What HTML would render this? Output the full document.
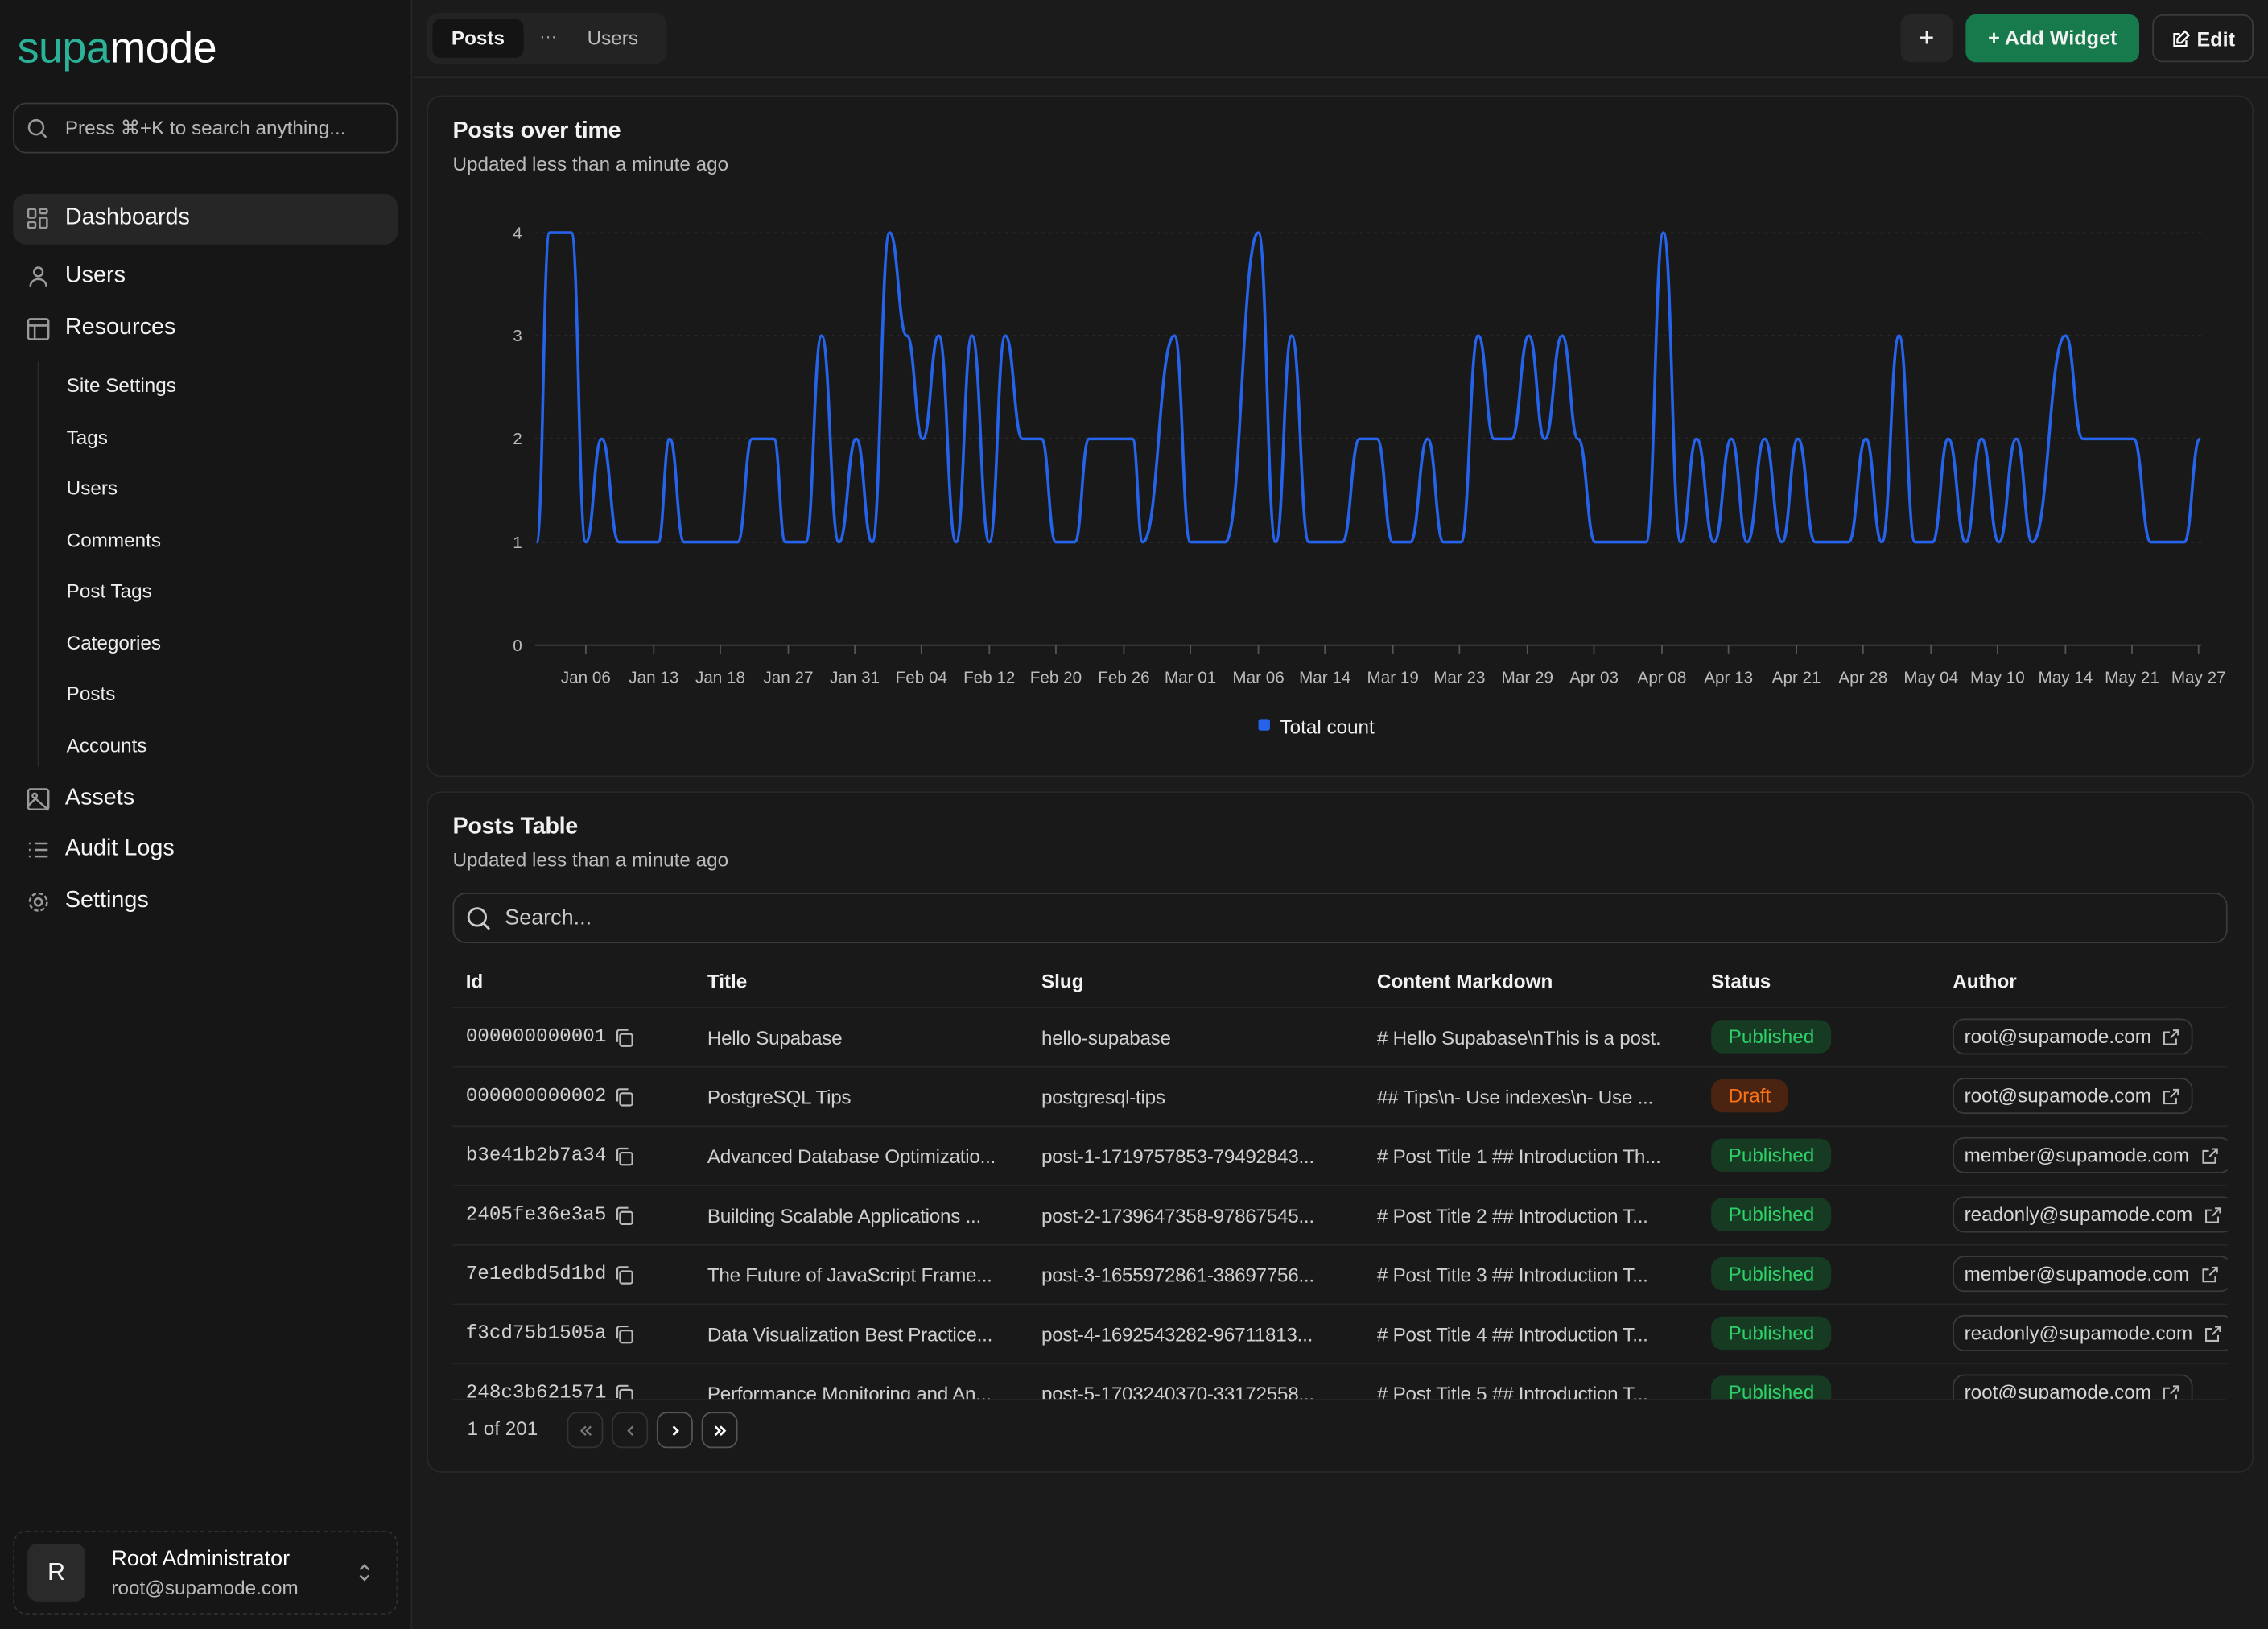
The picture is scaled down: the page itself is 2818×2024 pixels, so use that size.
<!DOCTYPE html>
<html><head><meta charset="utf-8"><style>
*{box-sizing:border-box;margin:0;padding:0}
html,body{width:2818px;height:2024px;overflow:hidden;background:#1a1a1a}
#w{position:absolute;left:0;top:0;width:1568px;height:1126px;transform:scale(1.79719,1.79751);transform-origin:0 0;font-family:"Liberation Sans",sans-serif;color:#f2f2f2;background:#1b1b1b}
.a{position:absolute}
.sb{left:0;top:0;width:285px;height:1126px;background:#161616;border-right:1px solid #262626}
.nav{left:18px;font-size:16px;color:#f4f4f4;display:flex;align-items:center;gap:10px}
.sub{left:46px;font-size:13.5px;color:#eee}
.ic{stroke:#9a9a9a;fill:none;stroke-width:1.4}
.card{background:#191919;border:1px solid #282828;border-radius:10px}
.t{font-size:13.5px;color:#cfcfcf;white-space:nowrap;letter-spacing:-0.15px}
.mono{font-family:"Liberation Mono",monospace;font-size:13.5px;color:#d0d0d0;display:flex;align-items:center;gap:5px}
.pub{background:#163a22;color:#2fd06a;border-radius:8px;padding:4px 12px;font-size:13.5px}
.dr{background:#4a2410;color:#f97316;border-radius:8px;padding:4px 12px;font-size:13.5px}
.au{border:1px solid #3a3a3a;border-radius:8px;padding:4px 7px;font-size:13.5px;color:#d6d6d6;white-space:nowrap;display:flex;align-items:center;gap:7px}
.hl{left:313px;width:1226px;height:1px;background:#262626}
.btn{border:1px solid #333;border-radius:7px;width:25px;height:25px;display:flex;align-items:center;justify-content:center}
.ci{stroke:#bbb;fill:none;stroke-width:1.3}
</style></head><body><div id="w">
<svg width="0" height="0" style="position:absolute"><defs>
<symbol id="cp" viewBox="0 0 16 16"><rect x="5" y="5" width="9" height="9" rx="1.5" class="ci"/><path d="M3 11V3.5C3 2.7 3.7 2 4.5 2H11" class="ci"/></symbol>
<symbol id="ex" viewBox="0 0 16 16"><path d="M12 9v4.5H2.5V4H7M9.5 2.5h4v4M13.5 2.5L7.5 8.5" class="ci"/></symbol>
</defs></svg>
<div class="a sb"></div>
<div class="a" style="left:12px;top:17px;font-size:30px;letter-spacing:-0.3px"><span style="color:#2bb39a">supa</span><span style="color:#fff">mode</span></div>
<div class="a" style="left:9px;top:71px;width:266px;height:35px;border:1px solid #3a3a3a;border-radius:9px"></div>
<svg class="a" style="left:18px;top:81px" width="16" height="16" viewBox="0 0 16 16"><circle cx="7" cy="7" r="5" class="ic"/><path d="M11 11l3 3" class="ic"/></svg>
<div class="a" style="left:45px;top:81px;font-size:13.5px;color:#b8b8b8">Press ⌘+K to search anything...</div>
<div class="a" style="left:9px;top:134px;width:266px;height:35px;background:#262626;border-radius:9px"></div>
<div class="a nav" style="top:142px"><svg width="17" height="17" viewBox="0 0 17 17"><rect x="1.5" y="1.5" width="5" height="6" rx="1" class="ic"/><rect x="9.5" y="1.5" width="5" height="3" rx="1" class="ic"/><rect x="9.5" y="7.5" width="5" height="7" rx="1" class="ic"/><rect x="1.5" y="10.5" width="5" height="4" rx="1" class="ic"/></svg>Dashboards</div>
<div class="a nav" style="top:182px"><svg width="17" height="17" viewBox="0 0 17 17"><circle cx="8.5" cy="5" r="3" class="ic"/><path d="M3 15c0-3 2.5-5 5.5-5s5.5 2 5.5 5" class="ic"/></svg>Users</div>
<div class="a nav" style="top:218px"><svg width="17" height="17" viewBox="0 0 17 17"><rect x="1.5" y="1.5" width="14" height="14" rx="1.5" class="ic"/><path d="M1.5 6h14M6 6v9.5" class="ic"/></svg>Resources</div>
<div class="a" style="left:26px;top:250px;width:1px;height:280px;background:#2c2c2c"></div>
<div class="a sub" style="top:259px">Site Settings</div>
<div class="a sub" style="top:295px">Tags</div>
<div class="a sub" style="top:330px">Users</div>
<div class="a sub" style="top:366px">Comments</div>
<div class="a sub" style="top:401px">Post Tags</div>
<div class="a sub" style="top:437px">Categories</div>
<div class="a sub" style="top:472px">Posts</div>
<div class="a sub" style="top:508px">Accounts</div>
<div class="a nav" style="top:543px"><svg width="17" height="17" viewBox="0 0 17 17"><rect x="1.5" y="1.5" width="14" height="14" rx="1.5" class="ic"/><circle cx="6" cy="6" r="1.5" class="ic"/><path d="M1.5 13l5-5 9 8" class="ic"/></svg>Assets</div>
<div class="a nav" style="top:578px"><svg width="17" height="17" viewBox="0 0 17 17"><path d="M2 4h1M2 8.5h1M2 13h1M6 4h9M6 8.5h9M6 13h9" class="ic"/></svg>Audit Logs</div>
<div class="a nav" style="top:614px"><svg width="17" height="17" viewBox="0 0 17 17"><circle cx="8.5" cy="8.5" r="2.5" class="ic"/><circle cx="8.5" cy="8.5" r="6" class="ic" stroke-dasharray="3 1.7"/></svg>Settings</div>
<div class="a" style="left:9px;top:1058px;width:266px;height:58px;border:1px dashed #2e2e2e;border-radius:9px"></div>
<div class="a" style="left:19px;top:1067px;width:40px;height:40px;background:#2a2a2a;border-radius:7px;display:flex;align-items:center;justify-content:center;font-size:17px">R</div>
<div class="a" style="left:77px;top:1069px;font-size:15px;color:#fff">Root Administrator</div>
<div class="a" style="left:77px;top:1090px;font-size:13.5px;color:#bbb">root@supamode.com</div>
<svg class="a" style="left:245px;top:1079px" width="14" height="16" viewBox="0 0 14 16"><path d="M4 6l3-3 3 3M4 10l3 3 3-3" class="ic"/></svg>

<div class="a" style="left:286px;top:53px;width:1282px;height:1px;background:#262626"></div>
<div class="a" style="left:295px;top:9px;width:166px;height:35px;background:#232323;border-radius:8px"></div>
<div class="a" style="left:299px;top:13px;width:63px;height:27px;background:#141414;border-radius:6px;font-size:13.5px;display:flex;align-items:center;justify-content:center;font-weight:bold">Posts</div>
<div class="a" style="left:373px;top:18px;color:#aaa;font-size:12px">···</div>
<div class="a" style="left:406px;top:19px;color:#bbb;font-size:13.5px">Users</div>
<div class="a" style="left:1314px;top:10px;width:36px;height:33px;background:#262626;border-radius:7px;text-align:center;line-height:32px;font-size:18px">+</div>
<div class="a" style="left:1359px;top:10px;width:120px;height:33px;background:#177a4d;border-radius:7px;text-align:center;line-height:33px;font-size:14px;font-weight:bold">+ Add Widget</div>
<div class="a" style="left:1488px;top:10px;width:70px;height:33px;border:1px solid #3a3a3a;border-radius:7px;display:flex;align-items:center;justify-content:center;gap:4px;font-size:14px;font-weight:bold"><svg width="14" height="14" viewBox="0 0 16 16"><path d="M12 9v4.5H2.5V4H7M11 2l3 3-6 6H5V8z" stroke="#fff" fill="none" stroke-width="1.5"/></svg>Edit</div>

<div class="a card" style="left:295px;top:66px;width:1263px;height:471px"></div>
<div class="a" style="left:313px;top:82px;font-size:16px;font-weight:bold;letter-spacing:-0.2px">Posts over time</div>
<div class="a" style="left:313px;top:106px;font-size:13.5px;color:#bbb">Updated less than a minute ago</div>
<svg class="a" style="left:0;top:0" width="1568" height="530">
<g stroke="#2a2a2a" stroke-dasharray="2 3"><line x1="370" x2="1522" y1="161" y2="161"/><line x1="370" x2="1522" y1="232" y2="232"/><line x1="370" x2="1522" y1="303" y2="303"/><line x1="370" x2="1522" y1="375" y2="375"/></g>
<line x1="370" x2="1522" y1="446" y2="446" stroke="#444"/>
<g stroke="#555"><line x1="405" x2="405" y1="446" y2="452"/><line x1="452" x2="452" y1="446" y2="452"/><line x1="498" x2="498" y1="446" y2="452"/><line x1="545" x2="545" y1="446" y2="452"/><line x1="591" x2="591" y1="446" y2="452"/><line x1="637" x2="637" y1="446" y2="452"/><line x1="684" x2="684" y1="446" y2="452"/><line x1="730" x2="730" y1="446" y2="452"/><line x1="777" x2="777" y1="446" y2="452"/><line x1="823" x2="823" y1="446" y2="452"/><line x1="870" x2="870" y1="446" y2="452"/><line x1="916" x2="916" y1="446" y2="452"/><line x1="963" x2="963" y1="446" y2="452"/><line x1="1009" x2="1009" y1="446" y2="452"/><line x1="1056" x2="1056" y1="446" y2="452"/><line x1="1102" x2="1102" y1="446" y2="452"/><line x1="1149" x2="1149" y1="446" y2="452"/><line x1="1195" x2="1195" y1="446" y2="452"/><line x1="1242" x2="1242" y1="446" y2="452"/><line x1="1288" x2="1288" y1="446" y2="452"/><line x1="1335" x2="1335" y1="446" y2="452"/><line x1="1381" x2="1381" y1="446" y2="452"/><line x1="1428" x2="1428" y1="446" y2="452"/><line x1="1474" x2="1474" y1="446" y2="452"/><line x1="1520" x2="1520" y1="446" y2="452"/></g>
<g fill="#bbb" font-size="11.5" font-family="Liberation Sans" text-anchor="end"><text x="361" y="165">4</text><text x="361" y="236">3</text><text x="361" y="307">2</text><text x="361" y="379">1</text><text x="361" y="450">0</text></g>
<g fill="#bbb" font-size="11.5" font-family="Liberation Sans" text-anchor="middle">
<text x="405" y="472">Jan 06</text><text x="452" y="472">Jan 13</text><text x="498" y="472">Jan 18</text><text x="545" y="472">Jan 27</text><text x="591" y="472">Jan 31</text><text x="637" y="472">Feb 04</text><text x="684" y="472">Feb 12</text><text x="730" y="472">Feb 20</text><text x="777" y="472">Feb 26</text><text x="823" y="472">Mar 01</text><text x="870" y="472">Mar 06</text><text x="916" y="472">Mar 14</text><text x="963" y="472">Mar 19</text><text x="1009" y="472">Mar 23</text><text x="1056" y="472">Mar 29</text><text x="1102" y="472">Apr 03</text><text x="1149" y="472">Apr 08</text><text x="1195" y="472">Apr 13</text><text x="1242" y="472">Apr 21</text><text x="1288" y="472">Apr 28</text><text x="1335" y="472">May 04</text><text x="1381" y="472">May 10</text><text x="1428" y="472">May 14</text><text x="1474" y="472">May 21</text><text x="1520" y="472">May 27</text></g>
<path id="ln" fill="none" stroke="#2563eb" stroke-width="2" stroke-linejoin="round" d=""/>
<rect x="870" y="497" width="8" height="8" rx="1.5" fill="#2563eb"/>
<text x="885" y="507" fill="#eee" font-size="13.5" font-family="Liberation Sans">Total count</text>
</svg>
<script>
(function(){var s="371,1 380,4 395,4 405,1 416,2 428,1 455,1 463,2 473,1 510,1 520,2 535,2 543,1 557,1 568,3 580,1 592,2 603,1 615,4 627,3 638,2 649,3 661,1 672,3 684,1 695,3 707,2 720,2 730,1 743,1 753,2 783,2 790,1 812,3 823,1 847,1 870,4 882,1 893,3 905,1 928,1 940,2 952,2 963,1 975,1 987,2 998,1 1010,1 1022,3 1033,2 1045,2 1057,3 1068,2 1080,3 1091,2 1103,1 1138,1 1150,4 1162,1 1173,2 1185,1 1197,2 1208,1 1220,2 1232,1 1243,2 1255,1 1278,1 1290,2 1301,1 1313,3 1324,1 1336,1 1347,2 1359,1 1370,2 1382,1 1394,2 1405,1 1428,3 1440,2 1475,2 1487,1 1510,1 1521,2".split(" ").map(function(p){var a=p.split(",");return[+a[0],446-71.3*(+a[1])]});
var d="M"+s[0][0]+" "+s[0][1];for(var i=1;i<s.length;i++){var p=s[i-1],q=s[i],h=(q[0]-p[0])/2;d+=" C"+(p[0]+h)+" "+p[1]+" "+(q[0]-h)+" "+q[1]+" "+q[0]+" "+q[1];}
document.getElementById("ln").setAttribute("d",d);})();
</script>

<div class="a card" style="left:295px;top:547px;width:1263px;height:471px"></div>
<div class="a" style="left:313px;top:563px;font-size:16px;font-weight:bold;letter-spacing:-0.2px">Posts Table</div>
<div class="a" style="left:313px;top:587px;font-size:13.5px;color:#bbb">Updated less than a minute ago</div>
<div class="a" style="left:313px;top:617px;width:1227px;height:35px;border:1px solid #3a3a3a;border-radius:9px"></div>
<svg class="a" style="left:322px;top:626px" width="18" height="18" viewBox="0 0 16 16"><circle cx="7" cy="7" r="5.3" stroke="#ccc" fill="none" stroke-width="1.4"/><path d="M11 11l3.5 3.5" stroke="#ccc" stroke-width="1.4"/></svg>
<div class="a" style="left:349px;top:626px;font-size:15px;color:#ccc">Search...</div>
<div class="a" style="left:313px;top:671px;width:1227px;font-size:13.5px;font-weight:bold;color:#f2f2f2">
<span class="a" style="left:9px">Id</span><span class="a" style="left:176px">Title</span><span class="a" style="left:407px">Slug</span><span class="a" style="left:639px">Content Markdown</span><span class="a" style="left:870px">Status</span><span class="a" style="left:1037px">Author</span></div>
<div class="a hl" style="top:696px"></div>
<div class="a" style="left:313px;top:697px;width:1227px;height:270px;overflow:hidden">
<div style="position:relative">
<div class="a" style="top:0;left:0;width:1227px;height:41px;border-bottom:1px solid #262626">
<span class="a mono" style="left:9px;top:13px">000000000001<svg width="15" height="15"><use href="#cp"/></svg></span><span class="a t" style="left:176px;top:13px">Hello Supabase</span><span class="a t" style="left:407px;top:13px">hello-supabase</span><span class="a t" style="left:639px;top:13px"># Hello Supabase\nThis is a post.</span><span class="a pub" style="left:870px;top:8px">Published</span><span class="a au" style="left:1037px;top:7px">root@supamode.com<svg width="14" height="14"><use href="#ex"/></svg></span></div>
<div class="a" style="top:41px;left:0;width:1227px;height:41px;border-bottom:1px solid #262626">
<span class="a mono" style="left:9px;top:13px">000000000002<svg width="15" height="15"><use href="#cp"/></svg></span><span class="a t" style="left:176px;top:13px">PostgreSQL Tips</span><span class="a t" style="left:407px;top:13px">postgresql-tips</span><span class="a t" style="left:639px;top:13px">## Tips\n- Use indexes\n- Use ...</span><span class="a dr" style="left:870px;top:8px">Draft</span><span class="a au" style="left:1037px;top:7px">root@supamode.com<svg width="14" height="14"><use href="#ex"/></svg></span></div>
<div class="a" style="top:82px;left:0;width:1227px;height:41px;border-bottom:1px solid #262626">
<span class="a mono" style="left:9px;top:13px">b3e41b2b7a34<svg width="15" height="15"><use href="#cp"/></svg></span><span class="a t" style="left:176px;top:13px">Advanced Database Optimizatio...</span><span class="a t" style="left:407px;top:13px">post-1-1719757853-79492843...</span><span class="a t" style="left:639px;top:13px"># Post Title 1 ## Introduction Th...</span><span class="a pub" style="left:870px;top:8px">Published</span><span class="a au" style="left:1037px;top:7px">member@supamode.com<svg width="14" height="14"><use href="#ex"/></svg></span></div>
<div class="a" style="top:123px;left:0;width:1227px;height:41px;border-bottom:1px solid #262626">
<span class="a mono" style="left:9px;top:13px">2405fe36e3a5<svg width="15" height="15"><use href="#cp"/></svg></span><span class="a t" style="left:176px;top:13px">Building Scalable Applications ...</span><span class="a t" style="left:407px;top:13px">post-2-1739647358-97867545...</span><span class="a t" style="left:639px;top:13px"># Post Title 2 ## Introduction T...</span><span class="a pub" style="left:870px;top:8px">Published</span><span class="a au" style="left:1037px;top:7px">readonly@supamode.com<svg width="14" height="14"><use href="#ex"/></svg></span></div>
<div class="a" style="top:164px;left:0;width:1227px;height:41px;border-bottom:1px solid #262626">
<span class="a mono" style="left:9px;top:13px">7e1edbd5d1bd<svg width="15" height="15"><use href="#cp"/></svg></span><span class="a t" style="left:176px;top:13px">The Future of JavaScript Frame...</span><span class="a t" style="left:407px;top:13px">post-3-1655972861-38697756...</span><span class="a t" style="left:639px;top:13px"># Post Title 3 ## Introduction T...</span><span class="a pub" style="left:870px;top:8px">Published</span><span class="a au" style="left:1037px;top:7px">member@supamode.com<svg width="14" height="14"><use href="#ex"/></svg></span></div>
<div class="a" style="top:205px;left:0;width:1227px;height:41px;border-bottom:1px solid #262626">
<span class="a mono" style="left:9px;top:13px">f3cd75b1505a<svg width="15" height="15"><use href="#cp"/></svg></span><span class="a t" style="left:176px;top:13px">Data Visualization Best Practice...</span><span class="a t" style="left:407px;top:13px">post-4-1692543282-96711813...</span><span class="a t" style="left:639px;top:13px"># Post Title 4 ## Introduction T...</span><span class="a pub" style="left:870px;top:8px">Published</span><span class="a au" style="left:1037px;top:7px">readonly@supamode.com<svg width="14" height="14"><use href="#ex"/></svg></span></div>
<div class="a" style="top:246px;left:0;width:1227px;height:41px">
<span class="a mono" style="left:9px;top:13px">248c3b621571<svg width="15" height="15"><use href="#cp"/></svg></span><span class="a t" style="left:176px;top:13px">Performance Monitoring and An...</span><span class="a t" style="left:407px;top:13px">post-5-1703240370-33172558...</span><span class="a t" style="left:639px;top:13px"># Post Title 5 ## Introduction T...</span><span class="a pub" style="left:870px;top:8px">Published</span><span class="a au" style="left:1037px;top:7px">root@supamode.com<svg width="14" height="14"><use href="#ex"/></svg></span></div>
</div></div>
<div class="a hl" style="top:967px"></div>
<div class="a" style="left:323px;top:980px;font-size:13.5px;color:#ccc">1 of 201</div>
<div class="a btn" style="left:392px;top:976px"><svg width="12" height="12" viewBox="0 0 12 12"><path d="M6 3L3 6l3 3M9.5 3l-3 3 3 3" stroke="#777" fill="none" stroke-width="1.3"/></svg></div>
<div class="a btn" style="left:423px;top:976px"><svg width="12" height="12" viewBox="0 0 12 12"><path d="M7.5 3l-3 3 3 3" stroke="#777" fill="none" stroke-width="1.3"/></svg></div>
<div class="a btn" style="left:454px;top:976px;border-color:#555"><svg width="12" height="12" viewBox="0 0 12 12"><path d="M4.5 3l3 3-3 3" stroke="#fff" fill="none" stroke-width="1.5"/></svg></div>
<div class="a btn" style="left:485px;top:976px;border-color:#555"><svg width="12" height="12" viewBox="0 0 12 12"><path d="M2.5 3l3 3-3 3M6 3l3 3-3 3" stroke="#fff" fill="none" stroke-width="1.5"/></svg></div>
</div></body></html>
